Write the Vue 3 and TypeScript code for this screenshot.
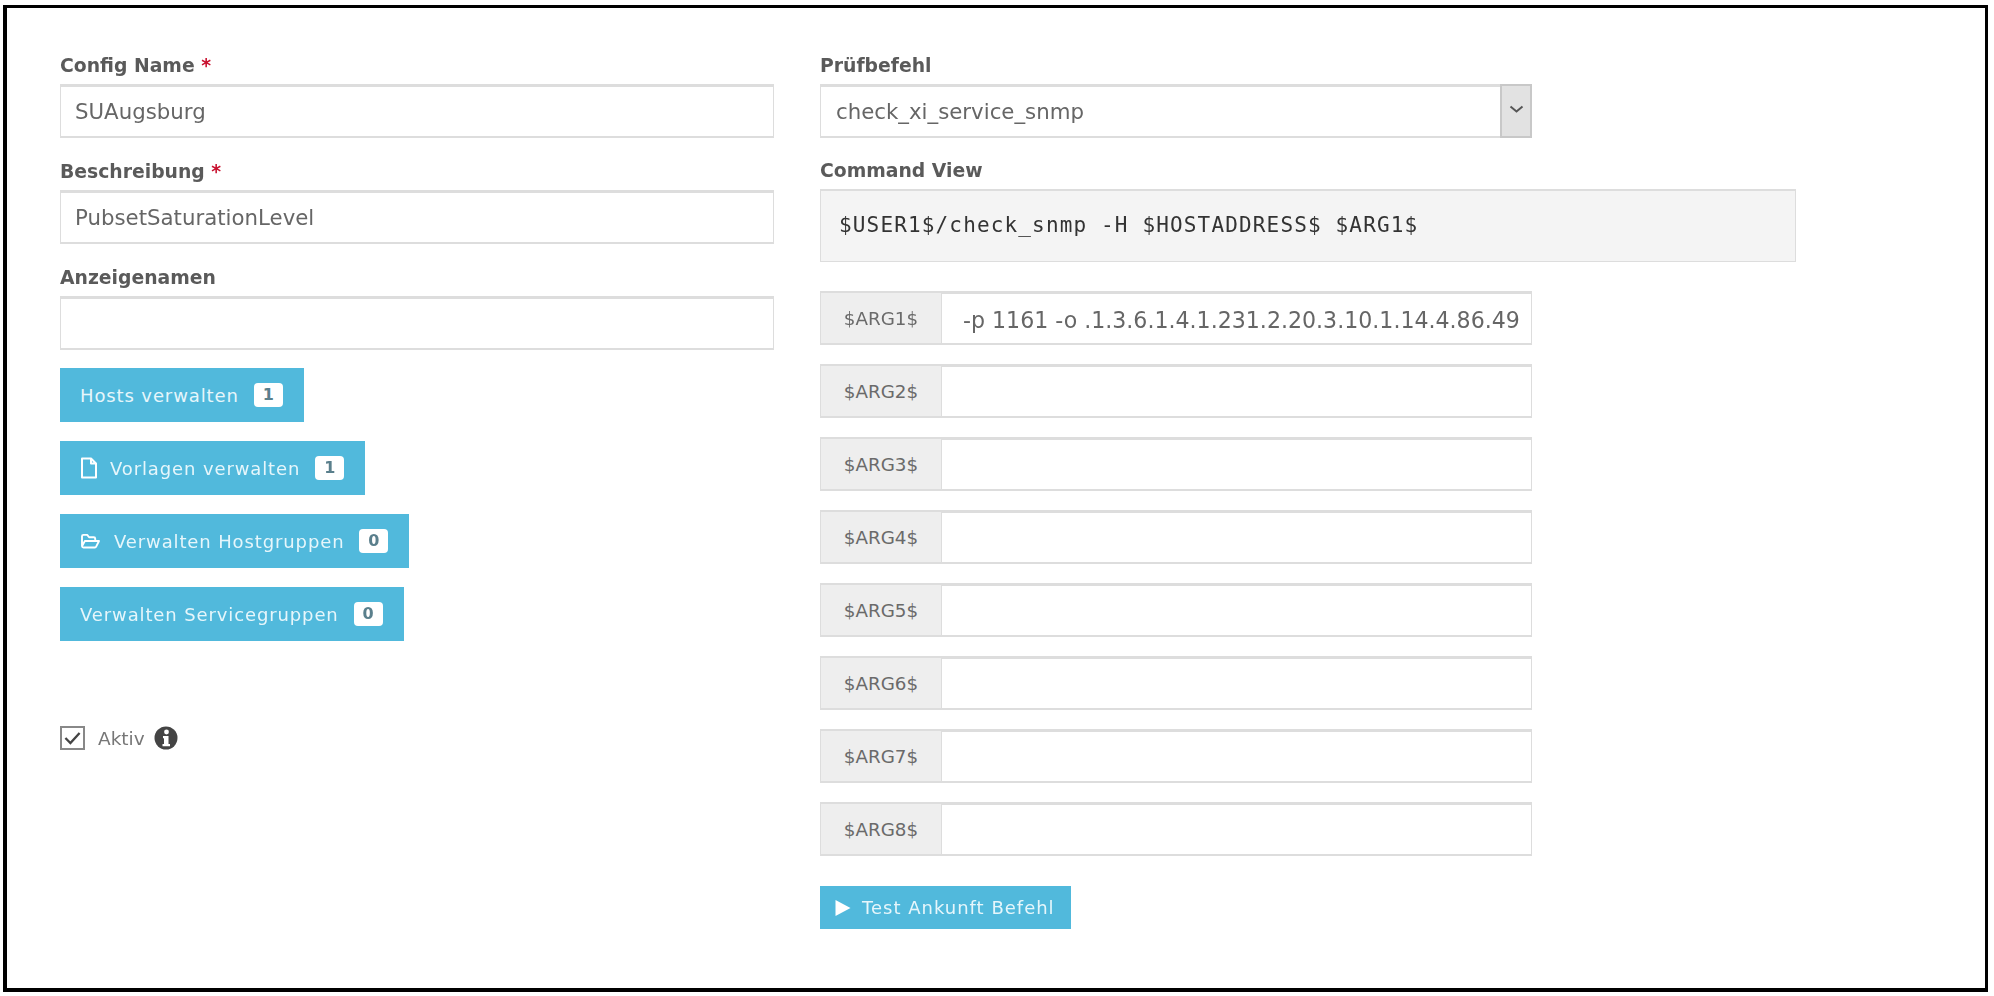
<script setup lang="ts">
interface ArgRow {
  name: string
  value: string
}

interface ManageButton {
  label: string
  count: number
  icon: 'none' | 'file' | 'folder'
}

const manageButtons: ManageButton[] = [
  { label: 'Hosts verwalten', count: 1, icon: 'none' },
  { label: 'Vorlagen verwalten', count: 1, icon: 'file' },
  { label: 'Verwalten Hostgruppen', count: 0, icon: 'folder' },
  { label: 'Verwalten Servicegruppen', count: 0, icon: 'none' },
]

const args: ArgRow[] = [
  { name: '$ARG1$', value: '-p 1161 -o .1.3.6.1.4.1.231.2.20.3.10.1.14.4.86.49' },
  { name: '$ARG2$', value: '' },
  { name: '$ARG3$', value: '' },
  { name: '$ARG4$', value: '' },
  { name: '$ARG5$', value: '' },
  { name: '$ARG6$', value: '' },
  { name: '$ARG7$', value: '' },
  { name: '$ARG8$', value: '' },
]
</script>

<template>
  <div class="page">
    <div class="frame">
      <form class="form" @submit.prevent>
        <section class="left">
          <div class="field">
            <label class="label">Config Name <span class="req">*</span></label>
            <input class="input" type="text" value="SUAugsburg" />
          </div>
          <div class="field">
            <label class="label">Beschreibung <span class="req">*</span></label>
            <input class="input" type="text" value="PubsetSaturationLevel" />
          </div>
          <div class="field field-last">
            <label class="label">Anzeigenamen</label>
            <input class="input" type="text" value="" />
          </div>

          <div class="buttons">
            <button v-for="b in manageButtons" :key="b.label" class="btn" type="button">
              <svg v-if="b.icon === 'file'" class="ico-file" viewBox="0 0 18 22" aria-hidden="true">
                <path d="M2 1.500h9l5 5v14H2z M11 1.500v5h5" fill="none" stroke="#fff" stroke-width="2" stroke-linejoin="round" />
              </svg>
              <svg v-if="b.icon === 'folder'" class="ico-folder" viewBox="0 0 22 18" aria-hidden="true">
                <path d="M2 14V3.500A1.500 1.500 0 0 1 3.500 2h4l2 2.500h5A1.500 1.500 0 0 1 16 6v2M2 14l3-5.500h15L17 14.500a1.500 1.500 0 0 1-1.300.8H3.500A1.500 1.500 0 0 1 2 14z" fill="none" stroke="#fff" stroke-width="2" stroke-linejoin="round" />
              </svg>
              <span class="btn-text">{{ b.label }}</span>
              <span class="badge">{{ b.count }}</span>
            </button>
          </div>

          <div class="active">
            <span class="checkbox">
              <svg viewBox="0 0 25 24" aria-hidden="true">
                <path d="M4 12l6 6L21 6" fill="none" stroke="#444" stroke-width="2.800" />
              </svg>
            </span>
            <span class="active-text">Aktiv</span>
            <svg class="ico-info" viewBox="0 0 24 24" aria-hidden="true">
              <circle cx="12" cy="12" r="11.500" fill="#444" />
              <circle cx="12.500" cy="6" r="2.400" fill="#fff" />
              <path d="M9 10h5.500v8H16v2.200H8.500V18H10v-5.800H9z" fill="#fff" />
            </svg>
          </div>
        </section>

        <section class="right">
          <div class="field field-select">
            <label class="label">Prüfbefehl</label>
            <div class="select-wrap">
              <select class="select">
                <option>check_xi_service_snmp</option>
              </select>
              <span class="select-arrow">
                <svg viewBox="0 0 15 8" aria-hidden="true">
                  <path d="M1.500 1.500L7.500 6.500l6-5" fill="none" stroke="#555" stroke-width="2" />
                </svg>
              </span>
            </div>
          </div>
          <div class="field">
            <label class="label">Command View</label>
            <div class="well">$USER1$/check_snmp -H $HOSTADDRESS$ $ARG1$</div>
          </div>

          <div class="args">
            <div v-for="a in args" :key="a.name" class="arg">
              <span class="addon">{{ a.name }}</span>
              <input class="arg-input" type="text" :value="a.value" />
            </div>
          </div>

          <button class="btn test" type="button">
            <svg class="ico-play" viewBox="0 0 16 16" aria-hidden="true">
              <path d="M1 0l15 8L1 16z" fill="#fff" />
            </svg>
            <span class="btn-text">Test Ankunft Befehl</span>
          </button>
        </section>
      </form>
    </div>
  </div>
</template>

<style>
html,
body {
  margin: 0;
  background: #fff;
}
</style>

<style scoped>
.page {
  box-sizing: border-box;
  width: 1994px;
  height: 996px;
  padding: 5px 0 0 3px;
  background: #fff;
  overflow: hidden;
}

.frame {
  box-sizing: border-box;
  width: 1985px;
  height: 987px;
  border-style: solid;
  border-color: #000;
  border-width: 3px 3px 4px 4px;
  background: #fff;
  font-family: "DejaVu Sans", sans-serif;
  overflow: hidden;
}

.form {
  display: flex;
  gap: 46px;
  padding: 46px 0 0 53px;
  filter: blur(0.6px);
}

.left {
  display: flex;
  flex-direction: column;
  width: 714px;
}

.right {
  display: flex;
  flex-direction: column;
  align-items: flex-start;
  width: 976px;
}

.field {
  display: flex;
  flex-direction: column;
  gap: 6px;
  margin-bottom: 22px;
  width: 100%;
}

.field-last {
  margin-bottom: 18px;
}

.field-select {
  margin-bottom: 21px;
}

.label {
  height: 24px;
  font-size: 18.800px;
  line-height: 24px;
  font-weight: 700;
  color: #5a5a5a;
}

.req {
  color: #c8102e;
}

.input {
  box-sizing: border-box;
  width: 100%;
  height: 54px;
  padding: 0 14px;
  border: 1px solid #ddd;
  border-top: 3px solid #ddd;
  border-bottom-width: 2px;
  background: #fff;
  font-family: "DejaVu Sans", sans-serif;
  font-size: 21.300px;
  color: #666;
  outline: none;
  border-radius: 0;
}

.buttons {
  display: flex;
  flex-direction: column;
  align-items: flex-start;
  gap: 19px;
}

.btn {
  display: flex;
  align-items: center;
  height: 54px;
  padding: 0 21px 0 20px;
  border: 0;
  border-radius: 0;
  background: #51b9dc;
  color: #e6f6fb;
  font-family: "DejaVu Sans", sans-serif;
  font-size: 18px;
  letter-spacing: 0.880px;
}

.btn-text {
  white-space: nowrap;
}

.ico-file {
  width: 18px;
  height: 22px;
  margin-right: 12px;
}

.ico-folder {
  width: 21px;
  height: 17px;
  margin-right: 13px;
}

.badge {
  box-sizing: border-box;
  width: 29px;
  height: 24px;
  margin-left: 15px;
  border-radius: 4px;
  background: #fff;
  color: #5a7f8c;
  font-size: 16px;
  font-weight: 700;
  letter-spacing: 0;
  line-height: 24px;
  text-align: center;
}

.active {
  display: flex;
  align-items: center;
  height: 24px;
  margin-top: 85px;
}

.checkbox {
  box-sizing: border-box;
  display: block;
  width: 25px;
  height: 24px;
  border: 2px solid #888;
  margin-right: 13px;
}

.checkbox svg {
  display: block;
  width: 21px;
  height: 20px;
}

.active-text {
  font-size: 18.500px;
  color: #777;
  margin-right: 9px;
}

.ico-info {
  width: 24px;
  height: 24px;
}

.select-wrap {
  position: relative;
  width: 712px;
  height: 54px;
}

.select {
  box-sizing: border-box;
  display: block;
  width: 100%;
  height: 100%;
  padding: 0 0 0 15px;
  border: 1px solid #ddd;
  border-top: 3px solid #ddd;
  border-bottom-width: 2px;
  border-radius: 0;
  background: #fff;
  appearance: none;
  font-family: "DejaVu Sans", sans-serif;
  font-size: 21.300px;
  color: #666;
}

.select-arrow {
  box-sizing: border-box;
  position: absolute;
  top: 0;
  right: 0;
  display: flex;
  align-items: center;
  justify-content: center;
  width: 32px;
  height: 54px;
  border: 2px solid #c8c8c8;
  background: #e2e2e2;
}

.select-arrow svg {
  width: 15px;
  height: 8px;
  margin-bottom: 4px;
}

.well {
  box-sizing: border-box;
  display: flex;
  align-items: center;
  width: 976px;
  height: 73px;
  padding: 0 18px 3px;
  border: 1px solid #ddd;
  border-top-width: 2px;
  background: #f4f4f4;
  font-family: "DejaVu Sans Mono", monospace;
  font-size: 21px;
  letter-spacing: 1.150px;
  color: #333;
}

.args {
  display: flex;
  flex-direction: column;
  gap: 19px;
  width: 712px;
  margin-top: 7px;
}

.arg {
  display: flex;
  height: 54px;
}

.addon {
  box-sizing: border-box;
  display: flex;
  align-items: center;
  justify-content: center;
  flex: none;
  width: 122px;
  border: 1px solid #ddd;
  border-top-width: 2px;
  border-bottom-width: 2px;
  background: #eee;
  font-size: 18.300px;
  color: #6a6a6a;
}

.arg-input {
  box-sizing: border-box;
  flex: 1;
  min-width: 0;
  padding: 2px 0 0 21px;
  border: 1px solid #ddd;
  border-left: 0;
  border-top: 3px solid #ddd;
  border-bottom-width: 2px;
  border-radius: 0;
  background: #fff;
  font-family: "DejaVu Sans", sans-serif;
  font-size: 22.100px;
  color: #666;
  outline: none;
}

.test {
  height: 43px;
  margin-top: 30px;
  padding: 0 16px 0 14px;
  letter-spacing: 1px;
}

.ico-play {
  width: 17px;
  height: 16px;
  margin-right: 11px;
}
</style>
